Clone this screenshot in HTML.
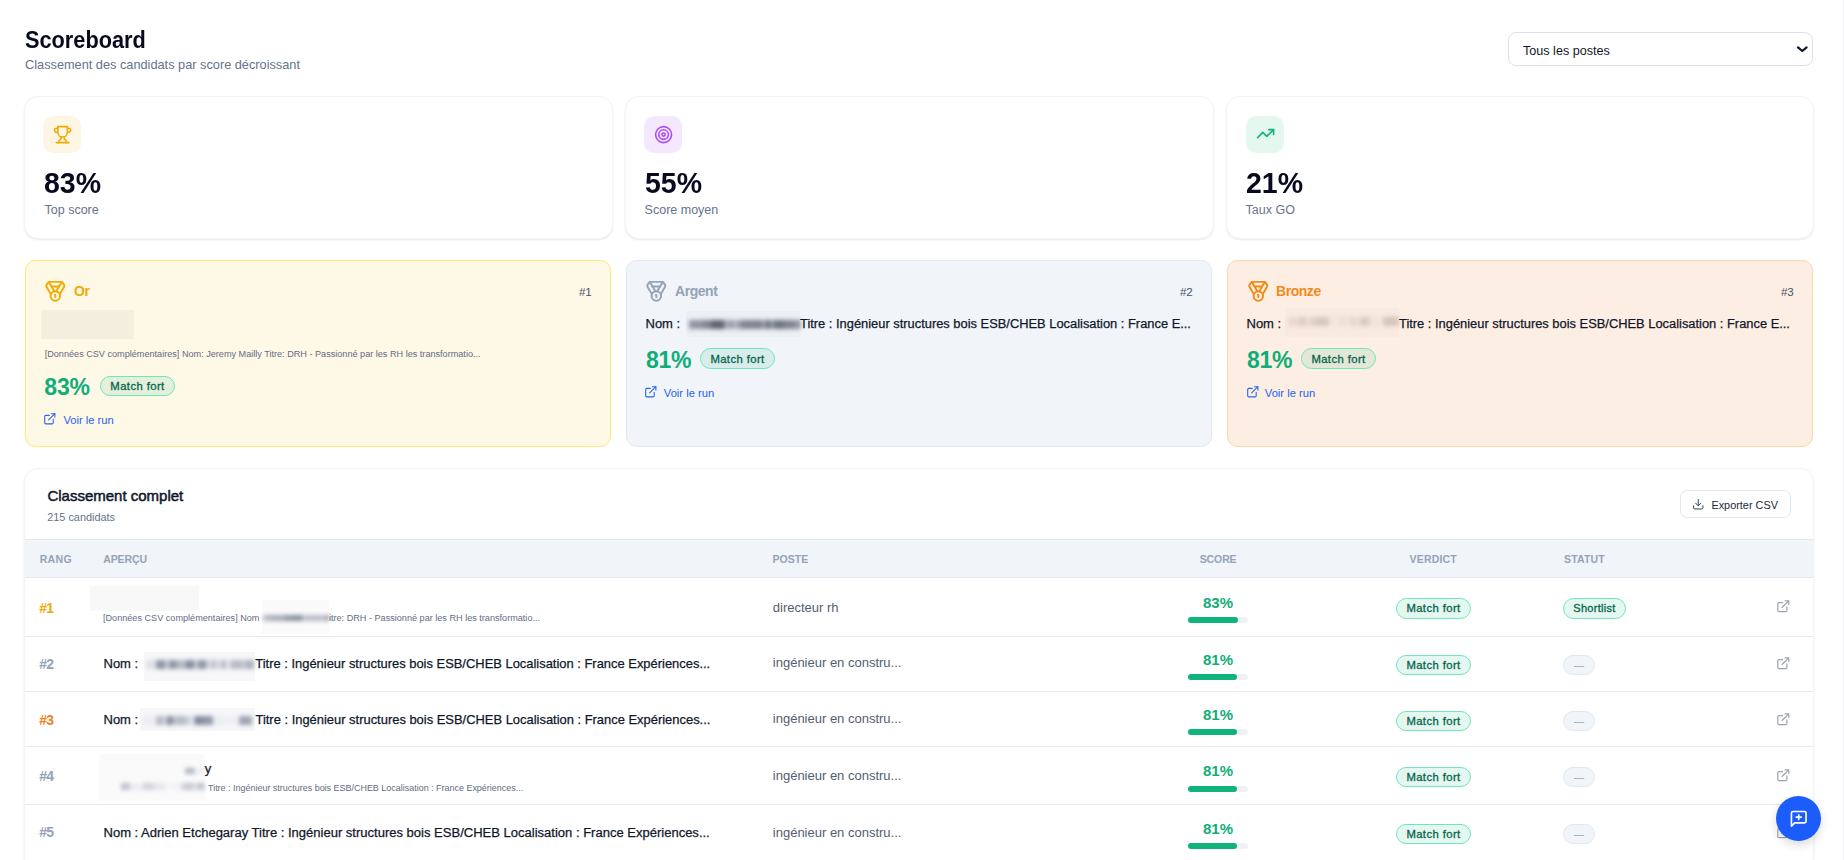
<!DOCTYPE html>
<html lang="fr">
<head>
<meta charset="utf-8">
<title>Scoreboard</title>
<style>
*{box-sizing:border-box;margin:0;padding:0}
html,body{width:1844px;height:860px;overflow:hidden;background:#ffffff}
body{font-family:"Liberation Sans",sans-serif;color:#0f172a;position:relative}
.t{position:absolute;white-space:nowrap}
.b{position:absolute}
.sx{transform-origin:0 50%;display:inline-block}
.card{position:absolute;background:#fff;border:1px solid #f3f4f6;border-radius:14px;box-shadow:0 1px 2px rgba(0,0,0,.09)}
.pill{position:absolute;border-radius:999px;border:1px solid #6ee7b7;background:rgba(16,185,129,.11);color:#05654b;font-weight:400;-webkit-text-stroke:0.3px #05654b;text-align:center;white-space:nowrap}
.blur{position:absolute;overflow:hidden}
.sm{position:absolute;filter:blur(2.2px)}
.sm i{position:absolute;display:block}
svg{position:absolute;overflow:visible}
</style>
</head>
<body>
<div class="b " style="left:1843px;top:0px;width:1.00px;height:860.00px;background:#f0f1f3"></div>
<div class="t " style="top:26.33px;font-size:23px;line-height:29px;left:25.00px;font-weight:700;color:#070a1f;"><span class="sx" style="transform:scaleX(0.945)">Scoreboard</span></div>
<div class="t " style="top:57.38px;font-size:12.75px;line-height:16px;left:25.00px;color:#64748b;">Classement des candidats par score décroissant</div>
<div class="b " style="left:1508px;top:32px;width:305.00px;height:34.00px;border:1px solid #dde2ea;border-radius:8px;background:#fff"></div>
<div class="t " style="top:42.83px;font-size:12.6px;line-height:16px;left:1523.00px;color:#0f172a;">Tous les postes</div>
<svg style="left:1797px;top:45px" width="11" height="8" viewBox="0 0 11 8"><path d="M1.0 2.4 L5.3 6.0 L9.6 2.4" fill="none" stroke="#0f172a" stroke-width="2.2" stroke-linecap="round" stroke-linejoin="round"/></svg>
<div class="b card" style="left:24px;top:96px;width:589.00px;height:143.00px;"></div>
<div class="b " style="left:43.2px;top:115.7px;width:38.00px;height:37.40px;background:#fef6e4;border-radius:10px"></div>
<svg style="left:52.9px;top:124.7px" width="19.2" height="19.2" viewBox="0 0 24 24" fill="none" stroke="#efab05" stroke-width="2" stroke-linecap="round" stroke-linejoin="round"><path d="M6 9H4.5a2.5 2.5 0 0 1 0-5H6"/><path d="M18 9h1.5a2.5 2.5 0 0 0 0-5H18"/><path d="M4 22h16"/><path d="M10 14.66V17c0 .55-.47.98-.97 1.21C7.85 18.75 7 20.24 7 22"/><path d="M14 14.66V17c0 .55.47.98.97 1.21C16.15 18.75 17 20.24 17 22"/><path d="M18 2H6v7a6 6 0 0 0 12 0V2Z"/></svg>
<div class="t " style="top:164.10px;font-size:30px;line-height:38px;left:43.60px;font-weight:700;color:#080b20;"><span class="sx" style="transform:scaleX(0.95)">83%</span></div>
<div class="t " style="top:201.67px;font-size:12.5px;line-height:16px;left:44.50px;color:#64748b;">Top score</div>
<div class="b card" style="left:625px;top:96px;width:589.00px;height:143.00px;"></div>
<div class="b " style="left:644.2px;top:115.7px;width:38.00px;height:37.40px;background:#f5e8fe;border-radius:10px"></div>
<svg style="left:653.9px;top:124.7px" width="19.2" height="19.2" viewBox="0 0 24 24" fill="none" stroke="#a94ef5" stroke-width="2" stroke-linecap="round" stroke-linejoin="round"><circle cx="12" cy="12" r="10"/><circle cx="12" cy="12" r="6"/><circle cx="12" cy="12" r="2"/></svg>
<div class="t " style="top:164.10px;font-size:30px;line-height:38px;left:644.60px;font-weight:700;color:#080b20;"><span class="sx" style="transform:scaleX(0.95)">55%</span></div>
<div class="t " style="top:201.67px;font-size:12.5px;line-height:16px;left:644.60px;color:#64748b;">Score moyen</div>
<div class="b card" style="left:1226px;top:96px;width:588.00px;height:143.00px;"></div>
<div class="b " style="left:1246.0px;top:115.7px;width:38.00px;height:37.40px;background:#e4f8f0;border-radius:10px"></div>
<svg style="left:1255.7px;top:123.9px" width="19.2" height="19.2" viewBox="0 0 24 24" fill="none" stroke="#12b27a" stroke-width="2" stroke-linecap="round" stroke-linejoin="round"><polyline points="22 7 13.5 15.5 8.5 10.5 2 17"/><polyline points="16 7 22 7 22 13"/></svg>
<div class="t " style="top:164.10px;font-size:30px;line-height:38px;left:1245.60px;font-weight:700;color:#080b20;"><span class="sx" style="transform:scaleX(0.95)">21%</span></div>
<div class="t " style="top:201.67px;font-size:12.5px;line-height:16px;left:1245.60px;color:#64748b;">Taux GO</div>
<div class="b " style="left:25px;top:260px;width:586.00px;height:187.00px;background:#fef8e7;border:1px solid #fde873;border-radius:10.5px"></div>
<svg style="left:43.6px;top:279.8px" width="22.6" height="22.6" viewBox="0 0 24 24" fill="none" stroke="#efac05" stroke-width="2.1" stroke-linecap="round" stroke-linejoin="round"><path d="M7.21 15 2.66 7.14a2 2 0 0 1 .13-2.2L4.4 2.8A2 2 0 0 1 6 2h12a2 2 0 0 1 1.6.8l1.6 2.14a2 2 0 0 1 .14 2.2L16.79 15"/><path d="M11 12 5.12 2.2"/><path d="m13 12 5.88-9.8"/><path d="M8 7h8"/><circle cx="12" cy="17" r="5"/><path d="M12 18v-2h-.5"/></svg>
<div class="t " style="top:282.15px;font-size:14px;line-height:18px;left:74.00px;font-weight:700;color:#efac05;letter-spacing:-0.45px">Or</div>
<div class="t " style="top:284.98px;font-size:11.6px;line-height:14px;right:1252.20px;color:#475569;">#1</div>
<div class="b " style="left:626px;top:260px;width:586.00px;height:187.00px;background:#f1f4f9;border:1px solid #e2e8f0;border-radius:10.5px"></div>
<svg style="left:644.6px;top:279.8px" width="22.6" height="22.6" viewBox="0 0 24 24" fill="none" stroke="#94a3b8" stroke-width="2.1" stroke-linecap="round" stroke-linejoin="round"><path d="M7.21 15 2.66 7.14a2 2 0 0 1 .13-2.2L4.4 2.8A2 2 0 0 1 6 2h12a2 2 0 0 1 1.6.8l1.6 2.14a2 2 0 0 1 .14 2.2L16.79 15"/><path d="M11 12 5.12 2.2"/><path d="m13 12 5.88-9.8"/><path d="M8 7h8"/><circle cx="12" cy="17" r="5"/><path d="M12 18v-2h-.5"/></svg>
<div class="t " style="top:282.15px;font-size:14px;line-height:18px;left:675.00px;font-weight:700;color:#94a3b8;letter-spacing:-0.45px">Argent</div>
<div class="t " style="top:284.98px;font-size:11.6px;line-height:14px;right:651.20px;color:#475569;">#2</div>
<div class="b " style="left:1227px;top:260px;width:586.00px;height:187.00px;background:#fdeee3;border:1px solid #fcd5a8;border-radius:10.5px"></div>
<svg style="left:1246.6px;top:279.8px" width="22.6" height="22.6" viewBox="0 0 24 24" fill="none" stroke="#f28a1a" stroke-width="2.1" stroke-linecap="round" stroke-linejoin="round"><path d="M7.21 15 2.66 7.14a2 2 0 0 1 .13-2.2L4.4 2.8A2 2 0 0 1 6 2h12a2 2 0 0 1 1.6.8l1.6 2.14a2 2 0 0 1 .14 2.2L16.79 15"/><path d="M11 12 5.12 2.2"/><path d="m13 12 5.88-9.8"/><path d="M8 7h8"/><circle cx="12" cy="17" r="5"/><path d="M12 18v-2h-.5"/></svg>
<div class="t " style="top:282.15px;font-size:14px;line-height:18px;left:1276.00px;font-weight:700;color:#f28a1a;letter-spacing:-0.45px">Bronze</div>
<div class="t " style="top:284.98px;font-size:11.6px;line-height:14px;right:50.20px;color:#475569;">#3</div>
<div class="b " style="left:41px;top:310px;width:93.00px;height:29.00px;background:#f4eedf"></div>
<div class="t " style="top:349.34px;font-size:9.12px;line-height:11px;left:44.70px;color:#5f6d84;">[Données CSV complémentaires] Nom: Jeremy Mailly Titre: DRH - Passionné par les RH les transformatio...</div>
<div class="t " style="top:372.93px;font-size:23px;line-height:29px;left:44.30px;font-weight:700;color:#0fae78;letter-spacing:-0.2px">83%</div>
<div class="pill" style="left:100.4px;top:376.3px;width:74.2px;height:19.5px;font-size:11.3px;line-height:18.9px;letter-spacing:0.4px">Match fort</div>
<svg style="left:43.4px;top:412.1px" width="13.6" height="13.6" viewBox="0 0 24 24" fill="none" stroke="#2563eb" stroke-width="1.9" stroke-linecap="round" stroke-linejoin="round"><path d="M15 3h6v6"/><path d="M10 14 21 3"/><path d="M18 13v6a2 2 0 0 1-2 2H5a2 2 0 0 1-2-2V8a2 2 0 0 1 2-2h6"/></svg><div class="t " style="top:413.12px;font-size:11.2px;line-height:14px;left:63.40px;color:#2563eb;">Voir le run</div>
<div class="t " style="top:315.50px;font-size:13px;line-height:16px;left:645.50px;color:#0f172a;-webkit-text-stroke:0.25px #0f172a">Nom : </div>
<div class="b " style="left:686px;top:311px;width:114.00px;height:25.50px;background:#eceff4"><div class="sm" style="left:2px;right:0;top:9px;height:9px"><i style="left:1.0px;top:0;width:14.0px;height:100%;background:#565c6b;opacity:0.61"></i><i style="left:15.0px;top:0;width:8.1px;height:100%;background:#565c6b;opacity:0.72"></i><i style="left:23.3px;top:0;width:13.9px;height:100%;background:#565c6b;opacity:0.95"></i><i style="left:37.6px;top:0;width:9.8px;height:100%;background:#565c6b;opacity:0.53"></i><i style="left:47.8px;top:0;width:6.2px;height:100%;background:#565c6b;opacity:0.57"></i><i style="left:54.3px;top:0;width:13.3px;height:100%;background:#565c6b;opacity:0.72"></i><i style="left:67.6px;top:0;width:7.9px;height:100%;background:#565c6b;opacity:0.74"></i><i style="left:75.7px;top:0;width:8.8px;height:100%;background:#565c6b;opacity:0.78"></i><i style="left:84.9px;top:0;width:11.0px;height:100%;background:#565c6b;opacity:0.83"></i><i style="left:96.4px;top:0;width:11.8px;height:100%;background:#565c6b;opacity:0.72"></i><i style="left:108.7px;top:0;width:3.3px;height:100%;background:#565c6b;opacity:0.88"></i></div></div>
<div class="t " style="top:315.54px;font-size:12.88px;line-height:16px;left:800.00px;color:#0f172a;-webkit-text-stroke:0.25px #0f172a">Titre : Ingénieur structures bois ESB/CHEB Localisation : France E...</div>
<div class="t " style="top:346.13px;font-size:23px;line-height:29px;left:645.90px;font-weight:700;color:#0fae78;letter-spacing:-0.2px">81%</div>
<div class="pill" style="left:700.0px;top:348px;width:75.0px;height:20.7px;font-size:11.3px;line-height:20.1px;letter-spacing:0.4px">Match fort</div>
<svg style="left:643.8px;top:385.1px" width="13.6" height="13.6" viewBox="0 0 24 24" fill="none" stroke="#2563eb" stroke-width="1.9" stroke-linecap="round" stroke-linejoin="round"><path d="M15 3h6v6"/><path d="M10 14 21 3"/><path d="M18 13v6a2 2 0 0 1-2 2H5a2 2 0 0 1-2-2V8a2 2 0 0 1 2-2h6"/></svg><div class="t " style="top:386.12px;font-size:11.2px;line-height:14px;left:663.80px;color:#2563eb;">Voir le run</div>
<div class="t " style="top:315.50px;font-size:13px;line-height:16px;left:1246.50px;color:#0f172a;-webkit-text-stroke:0.25px #0f172a">Nom : </div>
<div class="b " style="left:1285px;top:308px;width:114.00px;height:29.00px;background:#f8eae0"><div class="sm" style="left:2px;right:0;top:9px;height:9px"><i style="left:1.0px;top:0;width:8.6px;height:100%;background:#b8a49c;opacity:0.24"></i><i style="left:11.1px;top:0;width:8.8px;height:100%;background:#b8a49c;opacity:0.41"></i><i style="left:22.0px;top:0;width:7.1px;height:100%;background:#b8a49c;opacity:0.38"></i><i style="left:29.1px;top:0;width:12.8px;height:100%;background:#b8a49c;opacity:0.48"></i><i style="left:43.2px;top:0;width:5.3px;height:100%;background:#b8a49c;opacity:0.10"></i><i style="left:51.2px;top:0;width:10.5px;height:100%;background:#b8a49c;opacity:0.15"></i><i style="left:63.9px;top:0;width:5.4px;height:100%;background:#b8a49c;opacity:0.36"></i><i style="left:72.2px;top:0;width:11.1px;height:100%;background:#b8a49c;opacity:0.45"></i><i style="left:84.1px;top:0;width:9.6px;height:100%;background:#b8a49c;opacity:0.10"></i><i style="left:95.6px;top:0;width:13.2px;height:100%;background:#b8a49c;opacity:0.54"></i><i style="left:108.8px;top:0;width:3.2px;height:100%;background:#b8a49c;opacity:0.48"></i></div></div>
<div class="t " style="top:315.54px;font-size:12.88px;line-height:16px;left:1399.00px;color:#0f172a;-webkit-text-stroke:0.25px #0f172a">Titre : Ingénieur structures bois ESB/CHEB Localisation : France E...</div>
<div class="t " style="top:346.13px;font-size:23px;line-height:29px;left:1246.90px;font-weight:700;color:#0fae78;letter-spacing:-0.2px">81%</div>
<div class="pill" style="left:1301.0px;top:348px;width:75.0px;height:20.7px;font-size:11.3px;line-height:20.1px;letter-spacing:0.4px">Match fort</div>
<svg style="left:1246.3px;top:385.1px" width="13.6" height="13.6" viewBox="0 0 24 24" fill="none" stroke="#2563eb" stroke-width="1.9" stroke-linecap="round" stroke-linejoin="round"><path d="M15 3h6v6"/><path d="M10 14 21 3"/><path d="M18 13v6a2 2 0 0 1-2 2H5a2 2 0 0 1-2-2V8a2 2 0 0 1 2-2h6"/></svg><div class="t " style="top:386.12px;font-size:11.2px;line-height:14px;left:1264.80px;color:#2563eb;">Voir le run</div>
<div class="b card" style="left:24px;top:468px;width:1790.00px;height:432.00px;"></div>
<div class="t " style="top:486.30px;font-size:15px;line-height:19px;left:47.40px;color:#0f172a;-webkit-text-stroke:0.5px #0f172a">Classement complet</div>
<div class="t " style="top:509.92px;font-size:10.9px;line-height:14px;left:47.20px;color:#64748b;">215 candidats</div>
<div class="b " style="left:1680px;top:490px;width:111.00px;height:28.00px;border:1px solid #e2e8f0;border-radius:7px;background:#fff"></div>
<svg style="left:1692px;top:497.5px" width="12.5" height="12.5" viewBox="0 0 24 24" fill="none" stroke="#334155" stroke-width="1.9" stroke-linecap="round" stroke-linejoin="round"><path d="M21 15v4a2 2 0 0 1-2 2H5a2 2 0 0 1-2-2v-4"/><polyline points="7 10 12 15 17 10"/><line x1="12" x2="12" y1="15" y2="3"/></svg>
<div class="t " style="top:497.72px;font-size:10.9px;line-height:14px;left:1711.40px;color:#1e293b;">Exporter CSV</div>
<div class="b " style="left:25px;top:539px;width:1788.00px;height:38.50px;background:#f1f4f9;border-top:1px solid #e3e8ef;border-bottom:1px solid #e3e8ef"></div>
<div class="t " style="top:552.66px;font-size:10.5px;line-height:13px;left:39.70px;font-weight:700;color:#94a3b8;letter-spacing:0.35px">RANG</div>
<div class="t " style="top:552.66px;font-size:10.5px;line-height:13px;left:103.20px;font-weight:700;color:#94a3b8;letter-spacing:-0.1px">APERÇU</div>
<div class="t " style="top:552.66px;font-size:10.5px;line-height:13px;left:772.60px;font-weight:700;color:#94a3b8;letter-spacing:0px">POSTE</div>
<div class="t " style="top:552.66px;font-size:10.5px;line-height:13px;left:1199.70px;font-weight:700;color:#94a3b8;letter-spacing:-0.1px">SCORE</div>
<div class="t " style="top:552.66px;font-size:10.5px;line-height:13px;left:1409.50px;font-weight:700;color:#94a3b8;letter-spacing:0.2px">VERDICT</div>
<div class="t " style="top:552.66px;font-size:10.5px;line-height:13px;left:1564.00px;font-weight:700;color:#94a3b8;letter-spacing:0.17px">STATUT</div>
<div class="b " style="left:25px;top:635.5px;width:1788.00px;height:1.00px;background:#e6eaf0"></div>
<div class="b " style="left:25px;top:691.0px;width:1788.00px;height:1.00px;background:#e6eaf0"></div>
<div class="b " style="left:25px;top:745.5px;width:1788.00px;height:1.00px;background:#e6eaf0"></div>
<div class="b " style="left:25px;top:804.0px;width:1788.00px;height:1.00px;background:#e6eaf0"></div>
<div class="t " style="top:599.15px;font-size:14px;line-height:18px;left:39.20px;font-weight:700;color:#f0aa08;letter-spacing:-0.6px">#1</div>
<div class="t " style="top:599.50px;font-size:13px;line-height:16px;left:772.80px;color:#525e72;">directeur rh</div>
<div class="t " style="top:593.30px;font-size:15px;line-height:19px;left:1203.00px;font-weight:700;color:#10ad76;">83%</div>
<div class="b " style="left:1188px;top:617px;width:60.00px;height:6.00px;background:#eef1f5;border-radius:3px"><div style="position:absolute;left:0;top:0;height:100%;width:50px;background:#10b47a;border-radius:3px"></div></div>
<div class="pill" style="left:1396px;top:598.4px;width:75.0px;height:20.2px;font-size:11.3px;line-height:19.6px;letter-spacing:0.4px">Match fort</div>
<div class="pill" style="left:1563px;top:598.4px;width:63.0px;height:20.2px;font-size:11.0px;line-height:19.6px;letter-spacing:0.3px">Shortlist</div>
<svg style="left:1776.3px;top:599.2px" width="14.5" height="14.5" viewBox="0 0 24 24" fill="none" stroke="#9ca3af" stroke-width="2" stroke-linecap="round" stroke-linejoin="round"><path d="M15 3h6v6"/><path d="M10 14 21 3"/><path d="M18 13v6a2 2 0 0 1-2 2H5a2 2 0 0 1-2-2V8a2 2 0 0 1 2-2h6"/></svg>
<div class="t " style="top:655.15px;font-size:14px;line-height:18px;left:39.20px;font-weight:700;color:#94a3b8;letter-spacing:-0.6px">#2</div>
<div class="t " style="top:655.00px;font-size:13px;line-height:16px;left:772.80px;color:#525e72;">ingénieur en constru...</div>
<div class="t " style="top:650.30px;font-size:15px;line-height:19px;left:1203.00px;font-weight:700;color:#10ad76;">81%</div>
<div class="b " style="left:1188px;top:673.7px;width:60.00px;height:6.00px;background:#eef1f5;border-radius:3px"><div style="position:absolute;left:0;top:0;height:100%;width:49px;background:#10b47a;border-radius:3px"></div></div>
<div class="pill" style="left:1396px;top:655px;width:75.0px;height:20.2px;font-size:11.3px;line-height:19.6px;letter-spacing:0.4px">Match fort</div>
<div class="pill" style="left:1563px;top:655px;width:32px;height:20.2px;background:#f1f5f9;border-color:#e2e8f0;color:#94a3b8;font-weight:400;-webkit-text-stroke:0;font-size:10px;line-height:19px">—</div>
<svg style="left:1776.3px;top:656.2px" width="14.5" height="14.5" viewBox="0 0 24 24" fill="none" stroke="#9ca3af" stroke-width="2" stroke-linecap="round" stroke-linejoin="round"><path d="M15 3h6v6"/><path d="M10 14 21 3"/><path d="M18 13v6a2 2 0 0 1-2 2H5a2 2 0 0 1-2-2V8a2 2 0 0 1 2-2h6"/></svg>
<div class="t " style="top:710.65px;font-size:14px;line-height:18px;left:39.20px;font-weight:700;color:#f58220;letter-spacing:-0.6px">#3</div>
<div class="t " style="top:711.20px;font-size:13px;line-height:16px;left:772.80px;color:#525e72;">ingénieur en constru...</div>
<div class="t " style="top:705.10px;font-size:15px;line-height:19px;left:1203.00px;font-weight:700;color:#10ad76;">81%</div>
<div class="b " style="left:1188px;top:728.8px;width:60.00px;height:6.00px;background:#eef1f5;border-radius:3px"><div style="position:absolute;left:0;top:0;height:100%;width:49px;background:#10b47a;border-radius:3px"></div></div>
<div class="pill" style="left:1396px;top:710.8px;width:75.0px;height:20.2px;font-size:11.3px;line-height:19.6px;letter-spacing:0.4px">Match fort</div>
<div class="pill" style="left:1563px;top:710.8px;width:32px;height:20.2px;background:#f1f5f9;border-color:#e2e8f0;color:#94a3b8;font-weight:400;-webkit-text-stroke:0;font-size:10px;line-height:19px">—</div>
<svg style="left:1776.3px;top:711.7px" width="14.5" height="14.5" viewBox="0 0 24 24" fill="none" stroke="#9ca3af" stroke-width="2" stroke-linecap="round" stroke-linejoin="round"><path d="M15 3h6v6"/><path d="M10 14 21 3"/><path d="M18 13v6a2 2 0 0 1-2 2H5a2 2 0 0 1-2-2V8a2 2 0 0 1 2-2h6"/></svg>
<div class="t " style="top:767.15px;font-size:14px;line-height:18px;left:39.20px;font-weight:700;color:#94a3b8;letter-spacing:-0.6px">#4</div>
<div class="t " style="top:767.50px;font-size:13px;line-height:16px;left:772.80px;color:#525e72;">ingénieur en constru...</div>
<div class="t " style="top:761.30px;font-size:15px;line-height:19px;left:1203.00px;font-weight:700;color:#10ad76;">81%</div>
<div class="b " style="left:1188px;top:785.9px;width:60.00px;height:6.00px;background:#eef1f5;border-radius:3px"><div style="position:absolute;left:0;top:0;height:100%;width:49px;background:#10b47a;border-radius:3px"></div></div>
<div class="pill" style="left:1396px;top:767.0px;width:75.0px;height:20.2px;font-size:11.3px;line-height:19.6px;letter-spacing:0.4px">Match fort</div>
<div class="pill" style="left:1563px;top:767.0px;width:32px;height:20.2px;background:#f1f5f9;border-color:#e2e8f0;color:#94a3b8;font-weight:400;-webkit-text-stroke:0;font-size:10px;line-height:19px">—</div>
<svg style="left:1776.3px;top:768.2px" width="14.5" height="14.5" viewBox="0 0 24 24" fill="none" stroke="#9ca3af" stroke-width="2" stroke-linecap="round" stroke-linejoin="round"><path d="M15 3h6v6"/><path d="M10 14 21 3"/><path d="M18 13v6a2 2 0 0 1-2 2H5a2 2 0 0 1-2-2V8a2 2 0 0 1 2-2h6"/></svg>
<div class="t " style="top:823.15px;font-size:14px;line-height:18px;left:39.20px;font-weight:700;color:#94a3b8;letter-spacing:-0.6px">#5</div>
<div class="t " style="top:824.80px;font-size:13px;line-height:16px;left:772.80px;color:#525e72;">ingénieur en constru...</div>
<div class="t " style="top:818.80px;font-size:15px;line-height:19px;left:1203.00px;font-weight:700;color:#10ad76;">81%</div>
<div class="b " style="left:1188px;top:842.8px;width:60.00px;height:6.00px;background:#eef1f5;border-radius:3px"><div style="position:absolute;left:0;top:0;height:100%;width:49px;background:#10b47a;border-radius:3px"></div></div>
<div class="pill" style="left:1396px;top:824px;width:75.0px;height:20.2px;font-size:11.3px;line-height:19.6px;letter-spacing:0.4px">Match fort</div>
<div class="pill" style="left:1563px;top:824px;width:32px;height:20.2px;background:#f1f5f9;border-color:#e2e8f0;color:#94a3b8;font-weight:400;-webkit-text-stroke:0;font-size:10px;line-height:19px">—</div>
<svg style="left:1776.3px;top:824.7px" width="14.5" height="14.5" viewBox="0 0 24 24" fill="none" stroke="#9ca3af" stroke-width="2" stroke-linecap="round" stroke-linejoin="round"><path d="M15 3h6v6"/><path d="M10 14 21 3"/><path d="M18 13v6a2 2 0 0 1-2 2H5a2 2 0 0 1-2-2V8a2 2 0 0 1 2-2h6"/></svg>
<div class="b " style="left:90px;top:585.5px;width:109.00px;height:25.00px;background:#f8f8f9"></div>
<div class="t " style="top:612.84px;font-size:9.12px;line-height:11px;left:103.00px;color:#5f6d84;">[Données CSV complémentaires] Nom<span style="display:inline-block;width:69.5px"></span>itre: DRH - Passionné par les RH les transformatio...</div>
<div class="b " style="left:262px;top:599.5px;width:67.00px;height:34.00px;background:#fafafb"><div class="sm" style="left:0;right:0;top:15px;height:6px"><i style="left:1.0px;top:0;width:7.2px;height:100%;background:#5f687b;opacity:0.45"></i><i style="left:8.3px;top:0;width:9.4px;height:100%;background:#5f687b;opacity:0.53"></i><i style="left:18.2px;top:0;width:4.4px;height:100%;background:#5f687b;opacity:0.55"></i><i style="left:22.6px;top:0;width:8.2px;height:100%;background:#5f687b;opacity:0.69"></i><i style="left:31.1px;top:0;width:10.3px;height:100%;background:#5f687b;opacity:0.73"></i><i style="left:41.8px;top:0;width:13.8px;height:100%;background:#5f687b;opacity:0.42"></i><i style="left:55.8px;top:0;width:5.4px;height:100%;background:#5f687b;opacity:0.44"></i><i style="left:62.1px;top:0;width:4.9px;height:100%;background:#5f687b;opacity:0.60"></i></div></div>
<div class="t " style="top:655.50px;font-size:13px;line-height:16px;left:103.50px;color:#0f172a;-webkit-text-stroke:0.25px #0f172a">Nom : </div>
<div class="b " style="left:144px;top:652px;width:110.50px;height:29.00px;background:#f7f7f9"><div class="sm" style="left:1px;right:0;top:8px;height:9px"><i style="left:1.0px;top:0;width:8.6px;height:100%;background:#55607a;opacity:0.15"></i><i style="left:11.3px;top:0;width:10.2px;height:100%;background:#55607a;opacity:0.64"></i><i style="left:22.8px;top:0;width:10.7px;height:100%;background:#55607a;opacity:0.63"></i><i style="left:33.9px;top:0;width:5.4px;height:100%;background:#55607a;opacity:0.46"></i><i style="left:39.6px;top:0;width:10.3px;height:100%;background:#55607a;opacity:0.69"></i><i style="left:51.6px;top:0;width:10.7px;height:100%;background:#55607a;opacity:0.63"></i><i style="left:64.1px;top:0;width:8.5px;height:100%;background:#55607a;opacity:0.31"></i><i style="left:74.6px;top:0;width:7.2px;height:100%;background:#55607a;opacity:0.36"></i><i style="left:84.7px;top:0;width:13.9px;height:100%;background:#55607a;opacity:0.39"></i><i style="left:99.7px;top:0;width:9.8px;height:100%;background:#55607a;opacity:0.46"></i></div></div>
<div class="t " style="top:655.52px;font-size:12.93px;line-height:16px;left:255.30px;color:#0f172a;-webkit-text-stroke:0.25px #0f172a">Titre : Ingénieur structures bois ESB/CHEB Localisation : France Expériences...</div>
<div class="t " style="top:711.50px;font-size:13px;line-height:16px;left:103.50px;color:#0f172a;-webkit-text-stroke:0.25px #0f172a">Nom : </div>
<div class="b " style="left:140px;top:708px;width:114.70px;height:23.00px;background:#f7f7f9"><div class="sm" style="left:1px;right:0;top:8px;height:9px"><i style="left:1.0px;top:0;width:12.8px;height:100%;background:#55607a;opacity:0.06"></i><i style="left:14.6px;top:0;width:8.2px;height:100%;background:#55607a;opacity:0.40"></i><i style="left:24.9px;top:0;width:8.1px;height:100%;background:#55607a;opacity:0.65"></i><i style="left:34.1px;top:0;width:9.9px;height:100%;background:#55607a;opacity:0.40"></i><i style="left:44.1px;top:0;width:6.2px;height:100%;background:#55607a;opacity:0.28"></i><i style="left:52.8px;top:0;width:9.8px;height:100%;background:#55607a;opacity:0.70"></i><i style="left:62.7px;top:0;width:9.3px;height:100%;background:#55607a;opacity:0.62"></i><i style="left:72.4px;top:0;width:12.2px;height:100%;background:#55607a;opacity:0.06"></i><i style="left:86.8px;top:0;width:8.3px;height:100%;background:#55607a;opacity:0.06"></i><i style="left:98.1px;top:0;width:13.4px;height:100%;background:#55607a;opacity:0.55"></i></div></div>
<div class="t " style="top:711.52px;font-size:12.93px;line-height:16px;left:255.50px;color:#0f172a;-webkit-text-stroke:0.25px #0f172a">Titre : Ingénieur structures bois ESB/CHEB Localisation : France Expériences...</div>
<div class="b " style="left:99px;top:754px;width:106.00px;height:47.00px;background:#fafafb"><div class="sm" style="left:21px;right:0;top:29px;height:7px"><i style="left:1.0px;top:0;width:8.5px;height:100%;background:#6f778a;opacity:0.42"></i><i style="left:10.9px;top:0;width:9.1px;height:100%;background:#6f778a;opacity:0.10"></i><i style="left:21.9px;top:0;width:11.9px;height:100%;background:#6f778a;opacity:0.28"></i><i style="left:34.1px;top:0;width:12.1px;height:100%;background:#6f778a;opacity:0.15"></i><i style="left:49.1px;top:0;width:10.5px;height:100%;background:#6f778a;opacity:0.05"></i><i style="left:61.2px;top:0;width:4.6px;height:100%;background:#6f778a;opacity:0.31"></i><i style="left:65.9px;top:0;width:8.6px;height:100%;background:#6f778a;opacity:0.38"></i><i style="left:76.1px;top:0;width:8.9px;height:100%;background:#6f778a;opacity:0.40"></i></div><div class="sm" style="left:85px;right:0;top:14px;height:6px"><i style="left:1.0px;top:0;width:10.2px;height:100%;background:#6f778a;opacity:0.51"></i><i style="left:14.1px;top:0;width:6.9px;height:100%;background:#6f778a;opacity:0.10"></i></div></div>
<div class="t " style="top:760.60px;font-size:13px;line-height:16px;left:204.70px;color:#0f172a;-webkit-text-stroke:0.25px #0f172a">y</div>
<div class="t " style="top:782.60px;font-size:8.96px;line-height:11px;left:208.00px;color:#5f6d84;">Titre : Ingénieur structures bois ESB/CHEB Localisation : France Expériences...</div>
<div class="t " style="top:825.19px;font-size:13.03px;line-height:16px;left:103.50px;color:#0f172a;-webkit-text-stroke:0.25px #0f172a">Nom : Adrien Etchegaray Titre : Ingénieur structures bois ESB/CHEB Localisation : France Expériences...</div>
<div class="b" style="left:1776px;top:796px;width:45px;height:45px;border-radius:50%;background:#1b5cfb;box-shadow:0 4px 10px rgba(0,0,0,.14)"></div>
<svg style="left:1788.6px;top:809px" width="19.5" height="19.5" viewBox="0 0 24 24" fill="none" stroke="#fff" stroke-width="2" stroke-linecap="round" stroke-linejoin="round"><path d="M21 15a2 2 0 0 1-2 2H7l-4 4V5a2 2 0 0 1 2-2h14a2 2 0 0 1 2 2z"/><path d="M12 7v6"/><path d="M9 10h6"/></svg>
</body>
</html>
